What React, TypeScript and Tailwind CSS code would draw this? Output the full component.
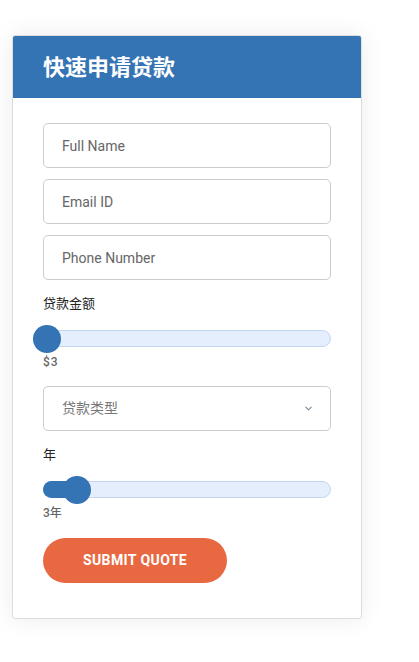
import React from 'react';
import { ChevronDown } from 'lucide-react';

const font = { fontFamily: 'Roboto, "Noto Sans CJK SC", sans-serif' };

const Field: React.FC<{ placeholder: string }> = ({ placeholder }) => (
  <input
    placeholder={placeholder}
    className="w-full h-[45px] rounded-[5px] border border-[#cccccc] px-[18px] text-[14px] text-[#333] placeholder:text-[#666] outline-none"
  />
);

const Slider: React.FC<{ fill: number }> = ({ fill }) => (
  <div className="relative h-[17px] rounded-full bg-[#e4eefc] border border-[#c4d6ef]">
    {fill > 0 && (
      <div className="absolute left-[-1px] top-[-1px] bottom-[-1px] rounded-l-full bg-[#3473b4]" style={{ width: fill }} />
    )}
    <div
      className="absolute top-1/2 -translate-y-1/2 w-[28px] h-[28px] rounded-full bg-[#3473b4]"
      style={{ left: fill > 0 ? fill - 15 : -11 }}
    />
  </div>
);

export default function App() {
  return (
    <div className="min-h-screen bg-white pt-[35px] pl-[12px]" style={font}>
      <div className="w-[350px] bg-white border border-[#dddddd] rounded-[3px] shadow-[0_0_24px_rgba(0,0,0,0.08)] overflow-hidden">
        <div className="h-[62px] bg-[#3473b4] flex items-center pl-[30px]">
          <h2 className="text-white text-[22px] font-bold">快速申请贷款</h2>
        </div>
        <div className="px-[30px] pt-[25px] pb-[35px] flex flex-col">
          <div className="flex flex-col gap-[11px]">
            <Field placeholder="Full Name" />
            <Field placeholder="Email ID" />
            <Field placeholder="Phone Number" />
          </div>
          <label className="mt-[14px] text-[13px] leading-[20px] text-[#222]">贷款金额</label>
          <div className="mt-[16px]">
            <Slider fill={0} />
          </div>
          <div className="mt-[7px] text-[12px] leading-[16px] font-medium text-[#666] tracking-[1px]">$3</div>
          <div className="mt-[16px] h-[45px] rounded-[5px] border border-[#cccccc] flex items-center justify-between pl-[18px] pr-[16px]">
            <span className="text-[14px] text-[#777]">贷款类型</span>
            <ChevronDown size={11} strokeWidth={2.5} className="text-[#7a8a9a]" />
          </div>
          <label className="mt-[14px] text-[13px] leading-[20px] text-[#222]">年</label>
          <div className="mt-[16px]">
            <Slider fill={34} />
          </div>
          <div className="mt-[7px] text-[12px] leading-[16px] font-medium text-[#666]">3年</div>
          <button className="mt-[17px] w-[184px] h-[45px] rounded-full bg-[#e86842] text-white text-[14px] font-bold uppercase tracking-[0.4px]">
            Submit Quote
          </button>
        </div>
      </div>
    </div>
  );
}
